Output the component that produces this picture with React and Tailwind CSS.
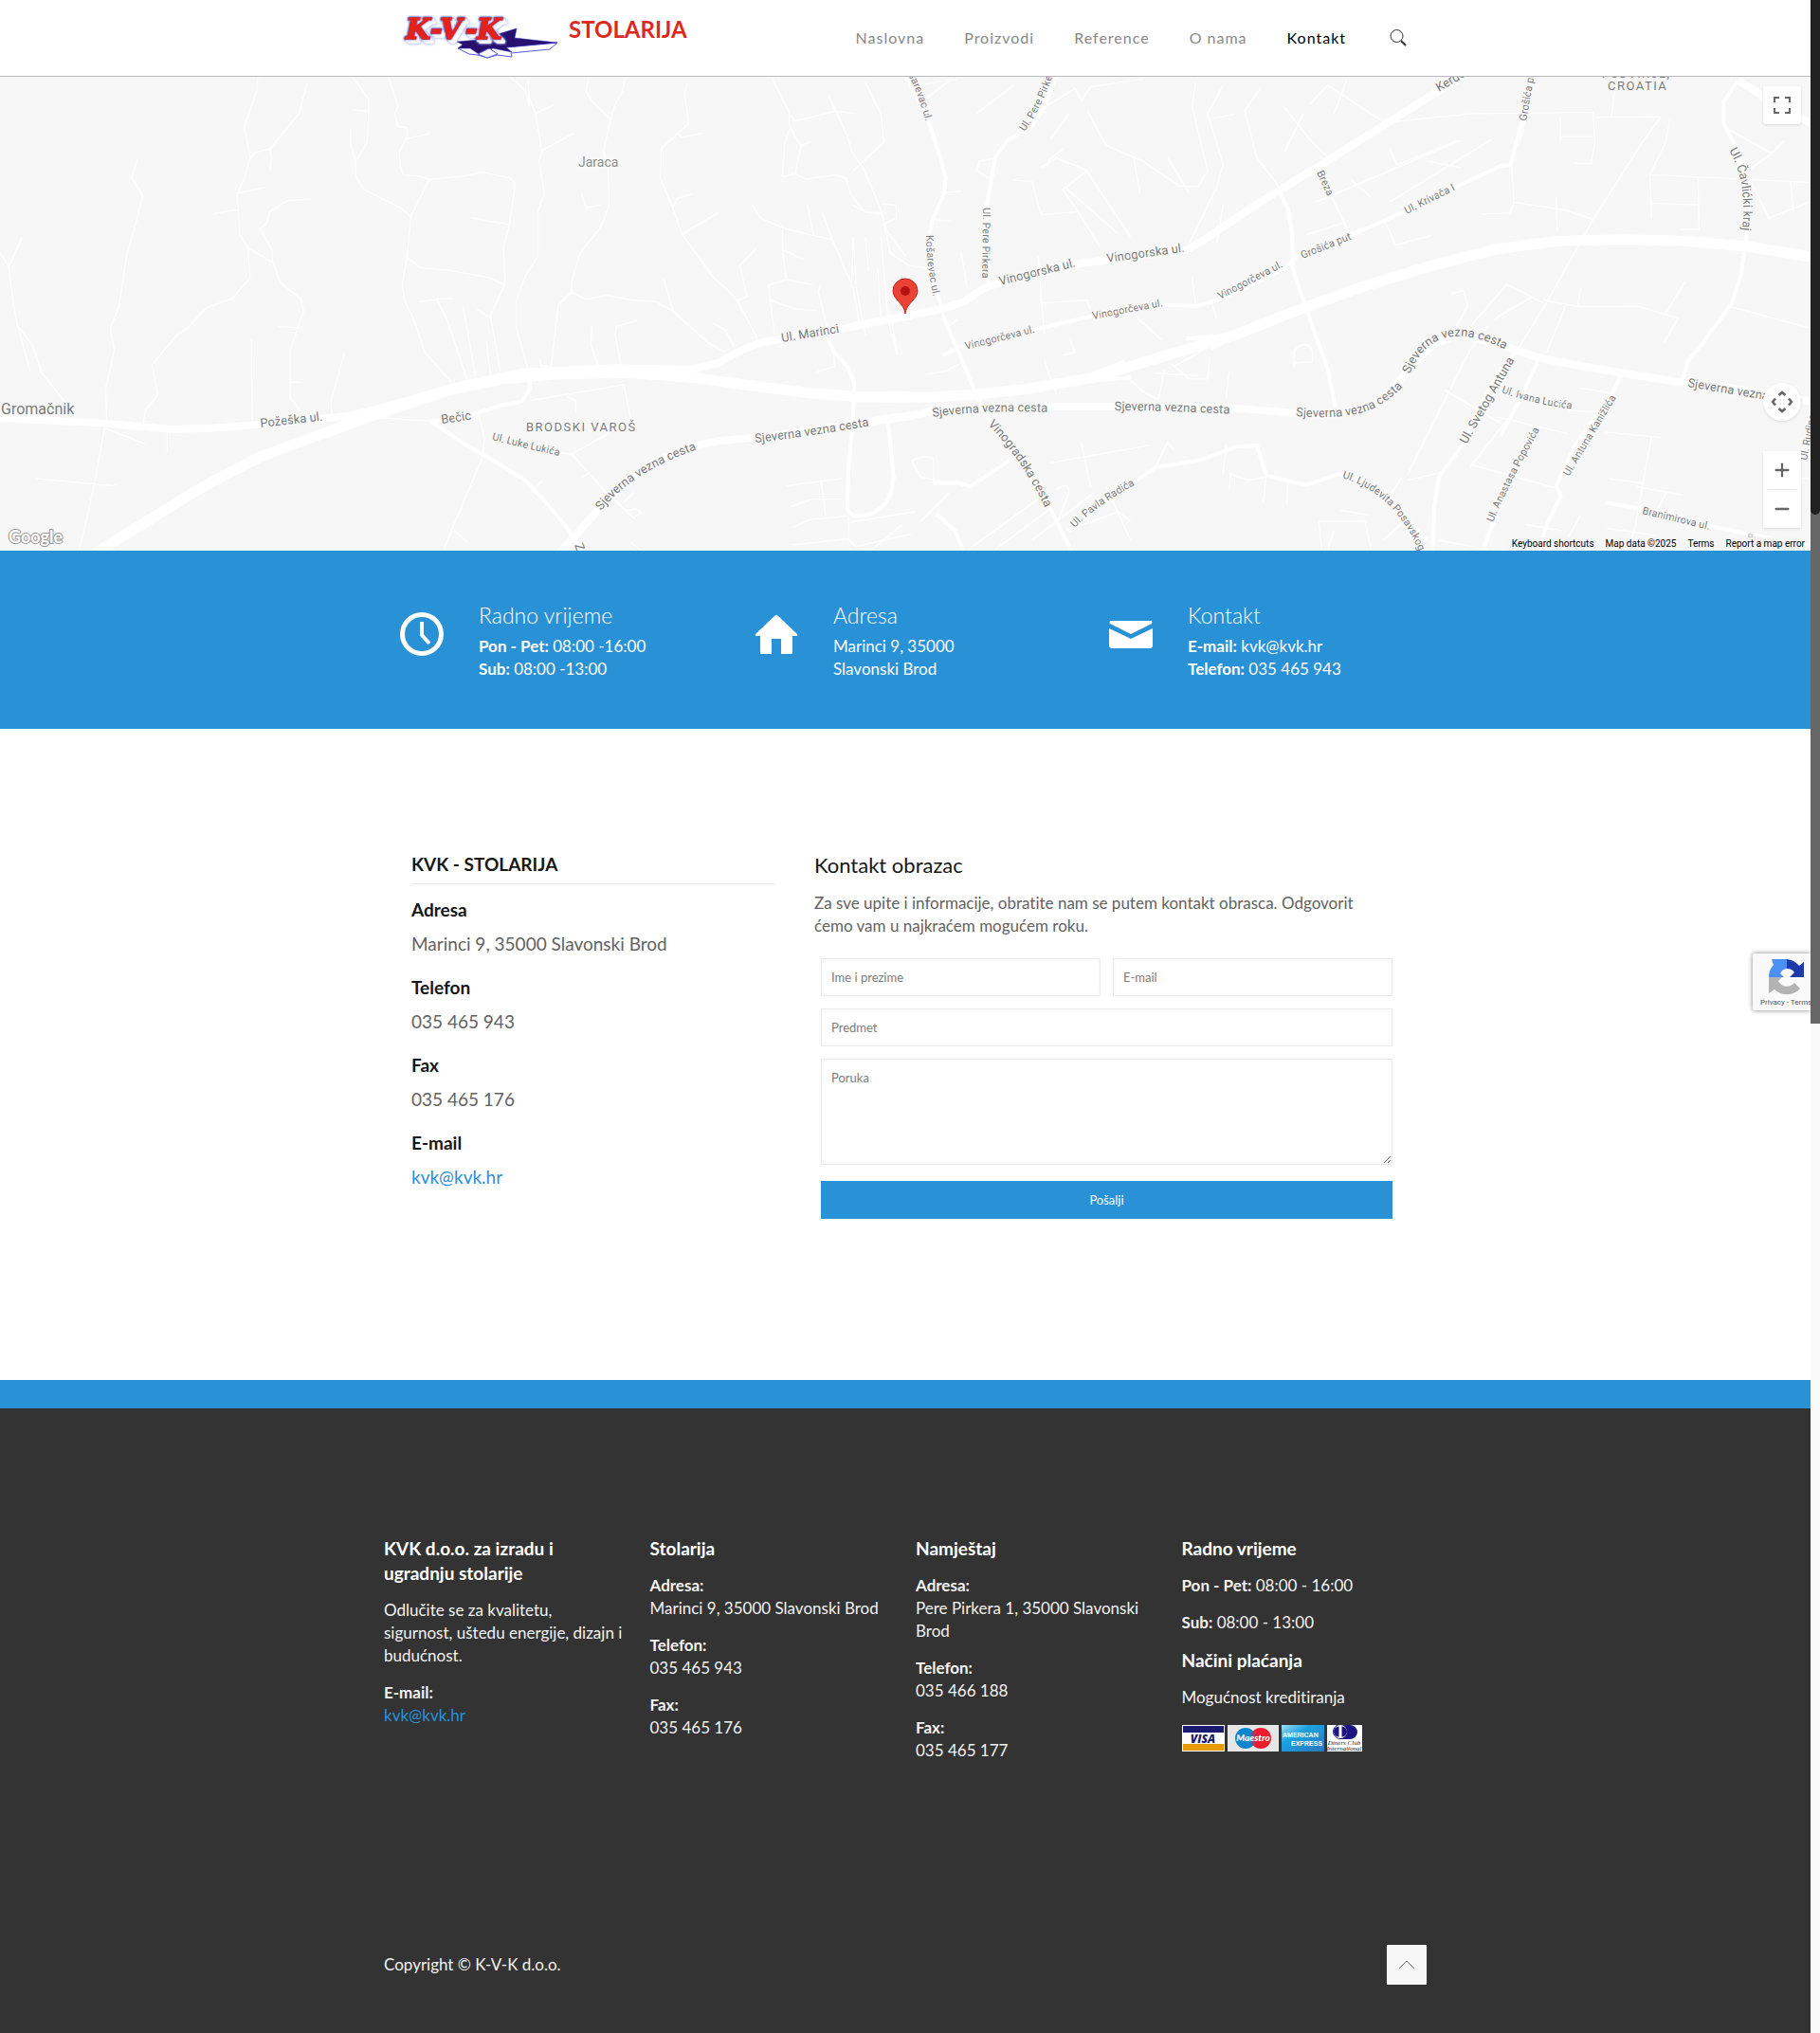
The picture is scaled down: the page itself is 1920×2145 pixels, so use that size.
import { Plus, Minus } from 'lucide-react'

const NAV = ['Naslovna', 'Proizvodi', 'Reference', 'O nama', 'Kontakt']

// roads of the western half, drawn in tile units
const WEST_MAIN = 'M165 1540L355 1325 450 1235 530 1180 620 1120 700 1070 780 1022 860 992 950 975 1080 970 1190 985 1300 1012 1400 1035 1470 1045 1570 1047'
const WEST_LARGE = [
  'M700 1060L780 1015 900 968 1060 955 1190 960 1240 938 1270 905 1310 875 1370 855 1450 832 1500 812 1570 790',
  'M0 1113L180 1130 290 1148 360 1146 450 1133 600 1108 700 1060',
  'M965 1540L1030 1405 1080 1310 1130 1250 1190 1205 1240 1185 1330 1170 1480 1130 1530 1115 1570 1103',
]
const WEST_MEDIUM = [
  'M740 1125L800 1110 860 1075 900 1060 913 1020 913 980',
  'M740 1120L800 1195 850 1248 905 1310 940 1380 975 1455 1005 1540',
  'M1427 860L1437 905 1460 950 1472 1000 1470 1110 1462 1280 1460 1395Q1462 1422 1480 1424 1520 1420 1535 1350L1540 1300 1530 1120',
]
const WEST_SMALL = [
  'M444 35L442 80 421 190 431 290 422 350 409 405 413 530 427 575 431 670 400 735 355 765 325 825 305 850 262 945 272 1040 250 1090 247 1130',
  'M529 55L515 150 490 205 465 262 440 272 431 290M465 262L468 290 465 327M409 402L456 384M367 467L400 456 412 455',
  'M537 420L495 425 465 460 460 495 448 515 468 580 470 620 427 575M470 620L483 685 518 735 523 775 500 900 500 1050 522 1100M480 823L512 828M502 1000L517 1000',
  'M608 35L636 105 633 240 613 300 613 350 628 390 690 448 708 475 702 600 693 690 697 740 715 810 732 905 778 1000',
  'M608 138L634 142M604 200L604 240 612 300M670 35L686 128 680 150 686 190 702 195 700 230 688 270 690 320 696 345 722 347 740 358 800 347 830 335 878 353 888 370 878 500 868 570 870 690 845 790 862 965',
  'M700 230L742 212M740 358L708 475M812 480L877 500M700 602L725 638 770 645 845 670 870 692',
  'M880 35L905 75 912 128 910 35M912 100L923 150 934 270 929 300 938 405 927 460 927 600 905 665 890 740 890 830 913 980M923 148L955 122M934 267L988 212',
  'M1014 35L1010 80 1020 110 1052 168 1060 120 1072 80 1078 35M1052 168L1040 270 1048 330 1050 440 1035 510 1000 590 985 680 985 715 1010 738 1045 725 1090 740 1130 745 1160 775 1220 875 1250 905',
  'M1002 402L1010 448 1035 438M985 715L962 755 950 950M1184 52L1180 90 1187 180 1140 260 1138 355 1160 450 1175 530 1230 670 1255 710 1270 740 1305 860M1168 212L1175 225 1210 212M1160 445L1168 418 1192 404M1175 532L1239 462',
  'M1330 35L1360 145 1360 190 1380 252 1370 340 1348 350 1352 245 1360 200M1360 150L1370 173 1440 142 1475 150M1428 92L1445 160 1460 220 1468 270 1490 330 1515 440 1528 520 1560 600M1380 252L1397 237',
  'M1370 340L1390 357 1440 343 1458 355 1465 400 1480 440 1492 462 1520 466M1296 437L1310 480 1350 512 1400 535 1434 548 1417 465M1391 437L1402 535M1348 515L1348 575 1355 675 1325 692 1327 740 1335 850',
  'M1303 577L1275 630 1287 728 1270 742M1348 580L1386 612M1355 675L1400 692M1415 690L1410 710 1427 840M1327 740L1370 768 1407 773M1434 548L1470 700 1480 810M1470 540L1467 700M1518 540L1530 800 1546 915',
  'M237 293L227 352 246 410 235 490 218 600 205 760 190 830 197 900 182 1020 184 1120M38 542L15 635 0 590M15 635L22 740 30 820 55 880 72 970 115 1070M30 820L52 965',
  'M433 865L435 1120M593 910L570 1060 572 1110M722 745L765 735 782 735M752 735L770 800 805 990M798 760L805 830 820 990M838 868L845 975M822 770L845 795M1020 822L1018 880 1030 945M1098 805L1062 823 1060 850 1070 945M1143 670L1160 775M1228 812L1250 835 1265 885M930 925L932 948 950 950',
  'M180 1145L165 1300 150 1430 135 1540M180 1145L250 1195M288 1150L288 1222M62 1305L195 1328 202 1320M825 1105L835 1180 832 1235 808 1340 782 1450 765 1530M782 1468L806 1508',
  'M650 1112L740 1123M913 1058L1075 1008 1087 1118M978 1045L992 1060 992 1095M850 1190L985 1228 1045 1350 1080 1408 1095 1400 1105 1412 1092 1430 1080 1410M985 1228L1060 1150M1015 1285L1003 1302M935 1312L918 1340M1075 1380L1093 1348',
  'M1355 1328L1450 1305M1415 1315L1423 1423M1362 1393L1400 1370 1450 1370M1366 1460L1395 1435 1460 1423M1366 1515L1462 1495M1462 1424L1463 1500 1475 1520 1570 1480M1463 1445L1570 1412M1437 915L1438 950 1408 967M1087 1508L1105 1532',
]

// eastern half
const EAST_MAIN = 'M0 1047L130 1047 200 1038 280 1022 390 985 500 920 620 850 730 765 830 695 930 635 1040 580 1140 553 1250 548 1350 553 1450 570 1570 608'
const EAST_LARGE = [
  'M0 822L140 770 180 745 210 705 250 675 350 630 420 610 540 582 570 548 660 430 760 310 870 175 960 65 1000 20',
  'M30 1125L90 1108 130 1090 330 1078 450 1076 620 1082 710 1097 790 1100 840 1080 880 1010 910 940 940 880 980 850 1030 870 1060 888 1110 922 1180 948 1250 972 1340 1000 1400 1012 1500 1040 1570 1068',
  'M1570 200L1490 110 1435 45',
]
const EAST_MEDIUM = [
  'M690 390L705 450 712 530 713 640 728 730 750 850 770 960 782 1080',
  'M1435 45L1412 110 1412 180 1430 250 1450 350 1455 450 1447 560 1440 660 1425 750 1380 870 1355 930 1345 990',
  'M1080 890L1050 960 1010 1100 980 1220 950 1300 942 1400 940 1540',
  'M145 785L170 900 200 1040 225 1130 265 1230 300 1330 320 1400 355 1540',
  'M500 755L560 758 590 740 650 690 700 640 720 600 800 540 860 490 980 380 1050 315 1066 313 1085 170 1100 30',
  'M350 1470L400 1390 490 1270 565 1245 620 1205 655 1200 670 1295 735 1325 790 1290 830 1310 880 1400 930 1500',
  'M85 30L120 160 137 260 150 350 148 400 128 490 122 560 125 650 145 770',
  'M330 30L310 130 290 190 250 235 230 290 225 350 217 440 217 560 220 690',
  'M145 915L170 890 290 835 400 785 500 755',
  'M1245 980L1230 1040 1170 1200 1140 1330 1148 1360 1125 1450 1110 1540',
  'M1110 935L1080 1060 1050 1170M1115 1140L1060 1330 1020 1540M1220 1380L1330 1420 1400 1460 1570 1525',
  'M385 995L450 985M380 980L440 935M540 862L620 850 580 895M135 1418L165 1470 180 1540M130 1320L170 1318 190 1330 260 1240',
]
const EAST_SMALL = [
  'M750 315L770 390 805 530M735 533L795 495M760 558L860 490M750 430L985 235M808 360L840 415M870 260L882 312 980 235M862 490L880 565 938 535M985 320L930 300M1035 232L870 430',
  'M860 178L1005 150 1200 145 1203 240 1197 305M1147 160L1147 235M1148 223L1200 223M1170 307L1200 307M1235 75L1230 160M1205 162L1310 160 1280 240 1200 485M1325 165L1318 240 1292 343 1550 367M1292 343L1295 480M1370 350L1372 515 1342 517M1295 433L1370 438',
  'M1068 313L1072 430 1155 455 1200 485M1072 430L1065 465 1020 468M1140 415L1142 520M1415 195L1490 275 1510 235M1490 275L1440 345M1455 360L1485 480 1550 430M1520 365L1525 460',
  'M1200 485L1130 730 1080 890M1060 690L1120 750M1060 690L985 860M1120 740L1180 762 1275 760 1338 798 1315 875M1350 680L1318 780M1155 760L1125 905M1180 700L1175 755M1425 762L1550 828M1040 800L1100 730',
  'M1045 1110L1160 1163M1000 1260L1140 1335M1180 1018L1230 1035M1060 1120L1000 1270M900 1310L955 1285M960 1025L1050 1130M900 1290L1000 900 1030 820M970 720L990 710 997 760 960 880M1160 1090L1215 1095',
  'M1220 1158L1310 1175M1295 1170L1268 1460 1258 1520M1225 1305L1280 1320M1270 1330L1345 1357M1320 1345L1305 1400M1222 1462L1300 1485M1480 1290L1570 1310M1090 1450L1150 1470M1180 1420L1160 1490M950 1500L1030 1530',
  'M470 40L385 65 370 110 360 70 310 130M380 140L410 250 470 300 530 380 560 380 575 330 550 130 555 50M510 290L545 400M600 60L575 150 600 310 590 380 560 500M660 70L635 140 655 290 690 380M730 150L700 270',
  'M260 360L290 365 305 470 365 460 400 570M365 460L340 390 380 330 330 290 305 320M340 262L315 300M230 290L205 300 200 330 220 355M345 385L430 530M380 335L450 540M455 290L465 400M585 165L620 150',
  'M740 120L770 60 840 150 862 178M700 130L740 230 770 290M1080 250L1095 130M800 45L780 150M590 560L600 440M560 500L545 560M130 485L160 490M145 400L175 395M350 150L320 230M260 60L200 150M160 40L120 100',
  'M20 50L45 150 50 240 0 330M45 435L70 440 70 480 50 500 60 590 90 630 125 640M0 440L20 460 45 465M0 540L5 700 20 850M20 540L25 650M60 780L72 915M40 640L45 800M175 590L185 700M100 60L170 40M170 800L150 830',
  'M300 600L310 850M305 750L380 740 385 770M352 860L360 905 340 915M460 795L500 865M550 665L555 750M580 740L590 800M118 975L150 965 175 940M310 930L330 1040M445 985L470 1030 495 1055 505 960M515 940L545 990 575 990 578 920',
  'M520 950L575 890M715 950L715 900Q735 860 745 900L745 935 715 940M610 965L605 1050M490 970L560 980M520 1215L510 1190 490 1270M600 1290L605 1200M610 1290L640 1310 670 1300M370 1190L385 1330M320 1255L480 1200',
  'M95 1250L110 1300 160 1320M95 1250Q110 1230 130 1240L130 1320M110 1440L155 1350M190 1525L300 1370M230 1530L320 1400M330 1340Q350 1310 350 1350L330 1450M290 1500L390 1350M410 1330L450 1500M0 1440L100 1410M30 1530L80 1450',
  'M345 1470L430 1410 450 1440M670 1295L665 1380M705 1310L703 1390M755 1440L830 1440 840 1530M755 1440L760 1530M790 1405L835 1420M770 1530L780 1470M870 1360L890 1300M900 1430L860 1500M610 1340L612 1290',
]

// labels that follow a road: [text, path, size]
const CURVED = [
  ['Požeška ul.', 'M275 370L345 362', 13],
  ['Bečic', 'M466 366L502 361', 13],
  ['Ul. Luke Lukića', 'M519 383Q550 391 594 401', 11],
  ['Sjeverna vezna cesta', 'M634 458Q668 415 742 391', 13],
  ['Sjeverna vezna cesta', 'M797 386Q850 380 925 367', 13],
  ['Sjeverna vezna cesta', 'M984 359Q1040 351 1112 354', 13],
  ['Sjeverna vezna cesta', 'M1176 352Q1230 352 1304 356', 13],
  ['Sjeverna vezna cesta', 'M1367 358Q1430 363 1456 346T1490 314', 13],
  ['Sjeverna vezna cesta', 'M1487 314Q1514 248 1592 290', 13],
  ['Sjeverna vezna cesta', 'M1780 327L1906 348', 13],
  ['Vinogorska ul.', 'M1055 220L1140 199', 13],
  ['Vinogorska ul.', 'M1168 196L1254 184', 13],
  ['Ul. Marinci', 'M825 280L896 268', 13],
  ['Košarevac ul.', 'M977 167Q977 200 986 238', 11],
  ['Košarevac ul.', 'M952 -13Q968 12 980 60', 11],
  ['Ul. Pere Pirkera', 'M1037 138L1036 220', 11],
  ['Ul. Pere Pirkera', 'M1081 58Q1106 22 1118 -26', 11],
  ['Vinogorčeva ul.', 'M1019 288L1098 268', 11],
  ['Vinogorčeva ul.', 'M1153 256L1232 241', 11],
  ['Vinogorčeva ul.', 'M1287 235L1362 196', 11],
  ['Grošića put', 'M1374 192L1434 168', 11],
  ['Ul. Krivača I', 'M1484 145L1548 113', 11],
  ['Breza', 'M1389 101L1406 138', 11],
  ['Kerdoš', 'M1518 16L1568 -14', 13],
  ['Grošića put', 'M1610 47L1622 -20', 11],
  ['Ul. Čavlićki kraj', 'M1824 78Q1845 112 1837 170', 13],
  ['Ul. Ivana Lucića', 'M1584 333Q1618 346 1668 352', 11],
  ['Ul. Svetog Antuna', 'M1547 388L1604 288', 13],
  ['Ul. Anastasa Popovića', 'M1575 470Q1594 425 1630 362', 11],
  ['Ul. Antuna Kanižlića', 'M1655 422L1710 330', 11],
  ['Branimirova ul.', 'M1732 461L1812 480', 11],
  ['Ul. Ljudevita Posavskog', 'M1416 423Q1474 440 1500 508', 11],
  ['Ul. Pavla Radića', 'M1134 476Q1158 451 1202 428', 11],
  ['Vinogradska cesta', 'M1042 367Q1080 405 1106 462', 13],
  ['Ul. Rudina', 'M1906 405L1918 345', 11],
  ['Zagrebačka', 'M606 494L630 560', 13],
  ['Branimirova ul.', 'M1842 489L1920 509', 11, '#c4c4c4'],
]

const FOOTER = [
  {
    title: 'Stolarija',
    rows: [['Adresa:', 'Marinci 9, 35000 Slavonski Brod'], ['Telefon:', '035 465 943'], ['Fax:', '035 465 176']],
  },
  {
    title: 'Namještaj',
    rows: [['Adresa:', 'Pere Pirkera 1, 35000 Slavonski Brod'], ['Telefon:', '035 466 188'], ['Fax:', '035 465 177']],
  },
]

function Roads({ transform, main, large, medium, small }) {
  const draw = (list, width) => list.map((d) => (
    <path key={d} d={d} strokeWidth={width} vectorEffect="non-scaling-stroke" />
  ))
  return (
    <g transform={transform} fill="none" stroke="#fff" strokeLinejoin="round">
      {draw(small, 1.25)}
      {draw(medium, 4)}
      {draw(large, 8)}
      {draw([main], 11)}
    </g>
  )
}

function Logo() {
  return (
    <svg width="166" height="48" viewBox="0 0 166 48" className="shrink-0" role="img" aria-label="K-V-K">
      <path d="M59 35L71 41 80 42 90 45 101 42 116 44 115 40 156 36 164 29 110 34" fill="#fff" stroke="#5a5ad8" />
      <path d="M58 28L80 26 78 16 101 20 121 14 119 24 164 29 110 34 116 39 96 35 81 41 72 35 59 35 64 31Z" fill="#27106e" stroke="#2a2ac0" strokeWidth="0.5" />
      <path d="M80 41L92 35 101 41 90 45Z" fill="#fff" stroke="#5a5ad8" />
      <text
        x="4 30 40 67 79" y="25" fontFamily="'DejaVu Serif', serif" fontWeight="700" fontStyle="italic" fontSize="30"
        fill="#e4221c" stroke="#e4221c" strokeWidth="1.5"
        className="[filter:drop-shadow(0_0_1px_#2b3fc4)_drop-shadow(2px_2px_0_#fff)_drop-shadow(2px_2px_0_#fff)_drop-shadow(0_0_1px_#6c7fe6)]"
      >
        K-V-K
      </text>
    </svg>
  )
}

function Header() {
  return (
    <header className="border-b border-[#b9b9b9] bg-white">
      <div className="mx-auto flex h-20 max-w-[1122px] items-center justify-between pr-8 pl-[30px]">
        <a href="#" className="flex items-start gap-[10px] text-2xl font-bold text-[#dd2820]">
          <Logo />
          <span className="leading-[30px]">STOLARIJA</span>
        </a>
        <div className="flex items-center">
          <nav className="flex gap-[42px] pr-[46px] text-base tracking-[1px]">
            {NAV.map((item) => (
              <a key={item} href="#" className={item === 'Kontakt' ? 'text-black' : 'text-[#888]'}>{item}</a>
            ))}
          </nav>
          <button type="button" aria-label="Pretraga" className="cursor-pointer">
            <svg width="18" height="18" viewBox="0 0 18 18" fill="none" stroke="#333">
              <circle cx="7.5" cy="7" r="6.5" strokeWidth="1" />
              <path d="M12 12l5 5" strokeWidth="2" />
            </svg>
          </button>
        </div>
      </div>
    </header>
  )
}

function Map() {
  const control = 'flex h-10 w-10 cursor-pointer items-center justify-center bg-white text-[#666]'
  return (
    <section aria-label="Karta" className="relative h-[500px] overflow-hidden bg-[#f7f7f7]">
      <svg viewBox="0 0 1910 500" preserveAspectRatio="xMidYMid slice" className="h-full w-full" fontFamily="Roboto, sans-serif">
        <Roads transform="translate(0 -11) scale(.6122 .3333)" main={WEST_MAIN} large={WEST_LARGE} medium={WEST_MEDIUM} small={WEST_SMALL} />
        <Roads transform="translate(900 -11) scale(.6505 .3333)" main={EAST_MAIN} large={EAST_LARGE} medium={EAST_MEDIUM} small={EAST_SMALL} />

        {/* Labels */}
        <g fill="#7b7b7b" stroke="#f9f9f9" strokeWidth="3" strokeLinejoin="round" paintOrder="stroke">
          {CURVED.map(([text, d, size, color], i) => (
            <g key={d}>
              <path id={`road-${i}`} d={d} fill="none" stroke="none" />
              <text fontSize={size} fill={color}><textPath href={`#road-${i}`}>{text}</textPath></text>
            </g>
          ))}
          <text x="1" y="356" fontSize="16">Gromačnik</text>
          <text x="610" y="95" fontSize="14" fill="#8d8d8d">Jaraca</text>
          <text x="555" y="374" fontSize="13" letterSpacing="1.5">BRODSKI VAROŠ</text>
          <text x="1690" y="1" fontSize="12" letterSpacing="1.5">PODVINJE,</text>
          <text x="1696" y="14" fontSize="13" letterSpacing="1.5">CROATIA</text>
        </g>

        {/* Marker */}
        <path d="M955 250C954 239 942 235 942 226A13 13 0 1 1 968 226C968 235 956 239 955 250Z" fill="#ea4335" stroke="#c5221f" />
        <circle cx="955" cy="226" r="5" fill="#b31412" />

        <text x="9" y="492" fontSize="18" fontFamily="Lato, sans-serif" fontWeight="700" fill="#fff" stroke="#999" strokeWidth="2" paintOrder="stroke">Google</text>
      </svg>

      <button type="button" aria-label="Cijeli zaslon" className={`${control} absolute top-[10px] right-[10px] rounded-xs shadow`}>
        <svg width="18" height="18" viewBox="0 0 18 18" fill="none" stroke="currentColor" strokeWidth="2">
          <path d="M1 6V1h5M12 1h5v5M17 12v5h-5M6 17H1v-5" />
        </svg>
      </button>
      <button type="button" aria-label="Pomicanje karte" className={`${control} absolute right-[10px] bottom-[137px] rounded-full shadow`}>
        <svg width="24" height="24" viewBox="0 0 24 24" fill="none" stroke="currentColor" strokeWidth="2.5">
          <path d="M8.500 5L12 2l3.500 3M8.500 19l3.500 3 3.500-3M5 8.500L2 12l3 3.500M19 8.500l3 3.500-3 3.500" />
        </svg>
      </button>
      <div className="absolute right-[10px] bottom-6 rounded-xs bg-white shadow">
        <button type="button" aria-label="Povećaj" className={control}><Plus size={22} strokeWidth={2.500} /></button>
        <div className="mx-[5px] h-px bg-[#e6e6e6]" />
        <button type="button" aria-label="Smanji" className={control}><Minus size={22} strokeWidth={2.500} /></button>
      </div>
      <div className="absolute right-0 bottom-0 flex h-[14px] items-center gap-3 bg-[#f5f5f5]/70 px-[6px] font-[Roboto,sans-serif] text-[10px] text-black">
        <button type="button">Keyboard shortcuts</button>
        <span>Map data ©2025</span>
        <a href="#">Terms</a>
        <a href="#">Report a map error</a>
      </div>
    </section>
  )
}

function InfoBox({ icon, title, children }) {
  return (
    <div className="flex gap-[37px] pl-7">
      <svg width="46" height="46" viewBox="0 0 46 46" className="mt-[11px] shrink-0" fill="#fff">{icon}</svg>
      <div>
        <h2 className="mb-[7px] text-[23px] leading-7 font-light">{title}</h2>
        <p>{children}</p>
      </div>
    </div>
  )
}

function InfoBar() {
  return (
    <section className="bg-[#2991d6] text-white">
      <div className="mx-auto grid h-[188px] max-w-[1122px] grid-cols-3 pt-[54px]">
        <InfoBox title="Radno vrijeme" icon={<><circle cx="23" cy="23" r="20.500" fill="none" stroke="#fff" strokeWidth="5" /><path d="M23 10v14l8 9" fill="none" stroke="#fff" strokeWidth="4" /></>}>
          <b>Pon - Pet:</b> 08:00 -16:00<br /><b>Sub:</b> 08:00 -13:00
        </InfoBox>
        <InfoBox title="Adresa" icon={<path d="M23 3Q24 3 25 4L45 23Q46 25 44 25H40V43Q40 44 39 44H28V28H18V44H7Q6 44 6 43V25H2Q0 25 1 23L21 4Q22 3 23 3Z" />}>
          Marinci 9, 35000<br />Slavonski Brod
        </InfoBox>
        <InfoBox title="Kontakt" icon={<path d="M1 9H45Q46 11 45 12L23 23 1 12Q0 11 1 9ZM0 17L23 28 46 17V35Q46 38 43 38H3Q0 38 0 35Z" />}>
          <b>E-mail:</b> kvk@kvk.hr<br /><b>Telefon:</b> 035 465 943
        </InfoBox>
      </div>
    </section>
  )
}

function ContactForm() {
  const field = 'block w-full border border-[#ebebeb] bg-white px-[10px] text-[13px] text-[#626262] shadow-[inset_0_0_2px_2px_rgba(0,0,0,0.02)] placeholder:text-[#7c7c7c]'
  return (
    <form className="grid grid-cols-2 gap-[13px] px-[7px]" onSubmit={(e) => e.preventDefault()}>
      <input type="text" aria-label="Ime i prezime" placeholder="Ime i prezime" className={`${field} h-10`} />
      <input type="email" aria-label="E-mail" placeholder="E-mail" className={`${field} h-10`} />
      <input type="text" aria-label="Predmet" placeholder="Predmet" className={`${field} col-span-2 h-10`} />
      <textarea aria-label="Poruka" placeholder="Poruka" className={`${field} col-span-2 h-28 resize py-[9px] leading-5`} />
      <button type="submit" className="col-span-2 mt-1 h-10 cursor-pointer bg-[#2991d6] text-[13px] text-white">Pošalji</button>
    </form>
  )
}

function Detail({ label, children }) {
  return (
    <div className="mb-[18px] leading-7">
      <h3 className="mb-2 font-bold text-[#161616]">{label}</h3>
      <p>{children}</p>
    </div>
  )
}

function Contact() {
  return (
    <section className="mx-auto flex h-[687px] max-w-[1122px] pt-[130px] text-[#626262]">
      <div className="ml-10 w-[384px] text-[19px]">
        <h2 className="mb-[13px] border-b border-[#ebebeb] pb-[7px] leading-[26px] font-bold text-[#161616]">KVK - STOLARIJA</h2>
        <Detail label="Adresa">Marinci 9, 35000 Slavonski Brod</Detail>
        <Detail label="Telefon">035 465 943</Detail>
        <Detail label="Fax">035 465 176</Detail>
        <Detail label="E-mail"><a href="#" className="text-[#2991d6]">kvk@kvk.hr</a></Detail>
      </div>
      <div className="mr-10 ml-[41px] flex-1">
        <h2 className="mb-[14px] text-[22px] leading-7 text-[#161616]">Kontakt obrazac</h2>
        <p className="mb-[22px] pr-7">Za sve upite i informacije, obratite nam se putem kontakt obrasca. Odgovorit ćemo vam u najkraćem mogućem roku.</p>
        <ContactForm />
      </div>
    </section>
  )
}

function Cards() {
  return (
    <div className="flex gap-[3px]">
      <svg width="45" height="28" viewBox="0 0 45 28" role="img" aria-label="Visa">
        <path d="M0 0h45v28H0z" fill="#fff" />
        <path d="M1 1h43v7H1z" fill="#1a1a70" />
        <path d="M1 20h43v7H1z" fill="#e69900" />
        <text x="22" y="18.500" textAnchor="middle" fontFamily="Open Sans, sans-serif" fontSize="12" fontWeight="800" fontStyle="italic" fill="#1a1a70">VISA</text>
      </svg>
      <svg width="54" height="28" viewBox="0 0 54 28" role="img" aria-label="Maestro">
        <path d="M0 0h54v28H0z" fill="#e6e6e6" />
        <circle cx="19" cy="14" r="11" fill="#0a86cd" />
        <circle cx="35" cy="14" r="11" fill="#ee1b2e" />
        <path d="M27 6.500a11 11 0 0 1 0 15 11 11 0 0 1 0-15Z" fill="#7a4a86" />
        <text x="27" y="17" textAnchor="middle" fontFamily="Lato, sans-serif" fontSize="10" fontWeight="900" fontStyle="italic" fill="#fff">Maestro</text>
      </svg>
      <svg width="45" height="28" viewBox="0 0 45 28" role="img" aria-label="American Express">
        <defs>
          <linearGradient id="amex" x1="0" y1="0" x2="1" y2="1">
            <stop offset="0" stopColor="#a5dcf5" />
            <stop offset=".35" stopColor="#1ba3df" />
            <stop offset="1" stopColor="#2877bd" />
          </linearGradient>
        </defs>
        <path d="M0 0h45v28H0z" fill="url(#amex)" />
        <g fontFamily="Liberation Sans, sans-serif" fontSize="7" fontWeight="700" fill="#fff">
          <text x="1" y="13">AMERICAN</text>
          <text x="10" y="22">EXPRESS</text>
        </g>
      </svg>
      <svg width="37" height="28" viewBox="0 0 37 28" role="img" aria-label="Diners Club International">
        <path d="M0 0h37v28H0z" fill="#fff" />
        <path d="M14 0h10a8 7.500 0 0 1 0 15H14Z" fill="#1c1480" />
        <circle cx="14" cy="7" r="7.500" fill="#fff" stroke="#1c1480" />
        <path d="M12.500 1.500v11a5.500 5.500 0 0 1 0-11ZM15.500 1.500v11a5.500 5.500 0 0 0 0-11Z" fill="#1c1480" />
        <g fontFamily="Liberation Serif, serif" fontSize="7" fontStyle="italic" fill="#222" textAnchor="middle">
          <text x="18" y="21">Diners Club</text>
          <text x="18" y="27">International</text>
        </g>
      </svg>
    </div>
  )
}

function Footer() {
  const title = 'mb-[14px] text-[19px] leading-[26px] font-bold text-white'
  return (
    <footer className="border-t-[30px] border-[#2991d6] bg-[#333] text-[#f2f2f2]">
      <div className="mx-auto grid h-[514px] max-w-[1122px] grid-cols-4 pt-[135px]">
        <div className="px-[11px]">
          <h2 className={title}>KVK d.o.o. za izradu i<br />ugradnju stolarije</h2>
          <p className="mb-[15px]">Odlučite se za kvalitetu,<br />sigurnost, uštedu energije, dizajn i budućnost.</p>
          <p><b>E-mail:</b><br /><a href="#" className="text-[#2991d6]">kvk@kvk.hr</a></p>
        </div>
        {FOOTER.map((col) => (
          <div key={col.title} className="px-[11px]">
            <h2 className={title}>{col.title}</h2>
            {col.rows.map(([label, value]) => (
              <p key={label} className="mb-[15px]"><b>{label}</b><br />{value}</p>
            ))}
          </div>
        ))}
        <div className="px-[11px]">
          <h2 className={title}>Radno vrijeme</h2>
          <p className="mb-[15px]"><b>Pon - Pet:</b> 08:00 - 16:00</p>
          <p className="mb-[15px]"><b>Sub:</b> 08:00 - 13:00</p>
          <h2 className={title}>Načini plaćanja</h2>
          <p className="mb-[17px]">Mogućnost kreditiranja</p>
          <Cards />
        </div>
      </div>
      <div className="mx-auto flex h-[145px] max-w-[1122px] items-center justify-between px-[11px]">
        <p>Copyright © K-V-K d.o.o.</p>
        <button type="button" aria-label="Na vrh" className="flex h-[42px] w-[42px] cursor-pointer items-center justify-center bg-[#f7f7f7]">
          <svg width="18" height="10" viewBox="0 0 18 10" fill="none" stroke="#666"><path d="M1 9l8-8 8 8" /></svg>
        </button>
      </div>
    </footer>
  )
}

function Recaptcha() {
  return (
    <div className="absolute top-[1006px] right-0 w-[61px] rounded-l-xs bg-[#f9f9f9] pt-[6px] pl-2 shadow-[0_0_5px_gray]">
      <svg width="38" height="38" viewBox="0 0 38 38" className="ml-[9px]">
        <path d="M19 0v10a9 9 0 0 0-7 5l4 4H0A19 19 0 0 1 5 6L3 0Z" fill="#4a90f5" />
        <path d="M19 0a19 19 0 0 1 13 7l5-4v16H22l5-5a9 9 0 0 0-8-4Z" fill="#1c3aa9" />
        <path d="M0 19h14l-4 4a10 10 0 0 0 17 2l6 6A19 19 0 0 1 6 32l-6 4Z" fill="#b3b3b3" />
      </svg>
      <p className="overflow-hidden font-[Roboto,sans-serif] text-[8px] leading-4 whitespace-nowrap text-[#555]">Privacy - Terms</p>
    </div>
  )
}

export default function App() {
  return (
    <div className="relative bg-[#fafafa] pr-[10px] font-[Lato,sans-serif] text-[17px] leading-6 [font-variant-ligatures:none]">
      <div className="relative overflow-hidden bg-white">
        <Header />
        <Map />
        <InfoBar />
        <Contact />
        <Footer />
        <Recaptcha />
      </div>
      {/* Scroll rail */}
      <div className="absolute top-0 right-0 h-[1080px] w-[10px] bg-[#666]">
        <div className="h-[543px] rounded-b-[5px] bg-[#212121]" />
      </div>
    </div>
  )
}
